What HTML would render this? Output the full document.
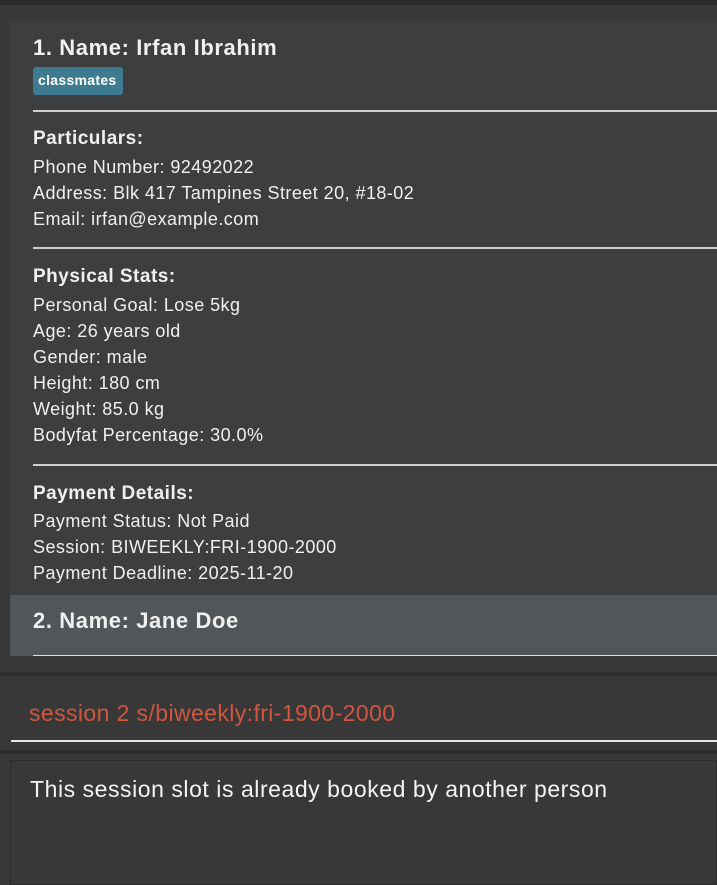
<!DOCTYPE html>
<html><head><meta charset="utf-8"><style>
*{margin:0;padding:0;box-sizing:border-box}
body{width:717px;height:885px;background:#383838;position:relative;overflow:hidden;font-family:"Liberation Sans",sans-serif;color:#fff}
.a{position:absolute}
.t{position:absolute;left:33px;font-size:18px;letter-spacing:0.45px;color:#f0f0f0;white-space:nowrap}
.h{position:absolute;left:33px;font-size:19px;letter-spacing:0.5px;font-weight:bold;color:#f0f0f0;white-space:nowrap}
.hr{position:absolute;left:33px;right:0;height:2px;background:#cfcfcf}
</style></head><body>
<div class="a" style="left:0;top:0;width:717px;height:5px;background:#2b2b2b"></div>
<div class="a" style="left:10px;top:21px;width:707px;height:574px;background:#3c3e3f"></div>
<div class="h" style="top:35px;font-size:22px;letter-spacing:0.6px">1. Name: Irfan Ibrahim</div>
<div class="a" style="left:33px;top:67px;width:90px;height:28px;background:#3e7b91;border-radius:3px;font-size:14px;font-weight:bold;color:#fff;padding:5px 0 0 5px;letter-spacing:0.3px">classmates</div>
<div class="hr" style="top:110px"></div>
<div class="h" style="top:128px">Particulars:</div>
<div class="t" style="top:157px">Phone Number: 92492022</div>
<div class="t" style="top:183px">Address: Blk 417 Tampines Street 20, #18-02</div>
<div class="t" style="top:209px">Email: irfan@example.com</div>
<div class="hr" style="top:247px"></div>
<div class="h" style="top:266px">Physical Stats:</div>
<div class="t" style="top:295px">Personal Goal: Lose 5kg</div>
<div class="t" style="top:321px">Age: 26 years old</div>
<div class="t" style="top:347px">Gender: male</div>
<div class="t" style="top:373px">Height: 180 cm</div>
<div class="t" style="top:399px">Weight: 85.0 kg</div>
<div class="t" style="top:425px">Bodyfat Percentage: 30.0%</div>
<div class="hr" style="top:464px"></div>
<div class="h" style="top:483px">Payment Details:</div>
<div class="t" style="top:511px">Payment Status: Not Paid</div>
<div class="t" style="top:537px">Session: BIWEEKLY:FRI-1900-2000</div>
<div class="t" style="top:563px">Payment Deadline: 2025-11-20</div>
<div class="a" style="left:10px;top:595px;width:707px;height:61px;background:#515658"></div>
<div class="h" style="top:608px;font-size:22px;letter-spacing:0.6px">2. Name: Jane Doe</div>
<div class="a" style="left:33px;top:655px;right:0;height:1px;background:#ddd"></div>
<div class="a" style="left:0;top:672px;width:717px;height:4px;background:#2e2e2e"></div>
<div class="a" style="left:29px;top:700px;font-size:23px;letter-spacing:0.4px;color:#d0563f;white-space:nowrap">session 2 s/biweekly:fri-1900-2000</div>
<div class="a" style="left:11px;top:740px;right:0;height:2px;background:#e8e8e8"></div>
<div class="a" style="left:0;top:750px;width:717px;height:4px;background:#2e2e2e"></div>
<div class="a" style="left:10px;top:760px;width:707px;height:125px;border:1px solid #2c2c2c;background:#383838"></div>
<div class="a" style="left:30px;top:776px;font-size:23px;letter-spacing:0.55px;color:#f4f4f4;white-space:nowrap">This session slot is already booked by another person</div>
</body></html>
